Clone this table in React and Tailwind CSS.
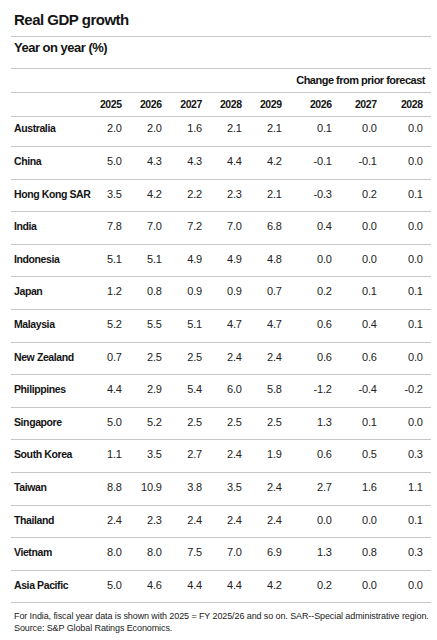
import React from "react";

const rows = [
  ["Australia", "2.0", "2.0", "1.6", "2.1", "2.1", "0.1", "0.0", "0.0"],
  ["China", "5.0", "4.3", "4.3", "4.4", "4.2", "-0.1", "-0.1", "0.0"],
  ["Hong Kong SAR", "3.5", "4.2", "2.2", "2.3", "2.1", "-0.3", "0.2", "0.1"],
  ["India", "7.8", "7.0", "7.2", "7.0", "6.8", "0.4", "0.0", "0.0"],
  ["Indonesia", "5.1", "5.1", "4.9", "4.9", "4.8", "0.0", "0.0", "0.0"],
  ["Japan", "1.2", "0.8", "0.9", "0.9", "0.7", "0.2", "0.1", "0.1"],
  ["Malaysia", "5.2", "5.5", "5.1", "4.7", "4.7", "0.6", "0.4", "0.1"],
  ["New Zealand", "0.7", "2.5", "2.5", "2.4", "2.4", "0.6", "0.6", "0.0"],
  ["Philippines", "4.4", "2.9", "5.4", "6.0", "5.8", "-1.2", "-0.4", "-0.2"],
  ["Singapore", "5.0", "5.2", "2.5", "2.5", "2.5", "1.3", "0.1", "0.0"],
  ["South Korea", "1.1", "3.5", "2.7", "2.4", "1.9", "0.6", "0.5", "0.3"],
  ["Taiwan", "8.8", "10.9", "3.8", "3.5", "2.4", "2.7", "1.6", "1.1"],
  ["Thailand", "2.4", "2.3", "2.4", "2.4", "2.4", "0.0", "0.0", "0.1"],
  ["Vietnam", "8.0", "8.0", "7.5", "7.0", "6.9", "1.3", "0.8", "0.3"],
  ["Asia Pacific", "5.0", "4.6", "4.4", "4.4", "4.2", "0.2", "0.0", "0.0"],
];

const years = ["2025", "2026", "2027", "2028", "2029", "2026", "2027", "2028"];

const grid = "grid grid-cols-[67.7px_40px_40px_40.3px_39.7px_40px_50px_45px_46px]";

export default function App() {
  return (
    <div className="w-[437px] h-[640px] bg-white text-[#141414] overflow-hidden font-['Liberation_Sans',Arial,sans-serif]">
      <div className="ml-[11px] w-[420px]">
        <div className="pl-[3px] pt-[10px] h-[37px] border-b border-[#c6c6c6] text-[15px] leading-[20px] font-bold tracking-[-0.5px]">
          Real GDP growth
        </div>
        <div className="pl-[3px] pt-[3px] h-[32px] border-b border-[#c6c6c6] text-[13px] leading-[16px] font-bold tracking-[-0.5px]">
          Year on year (%)
        </div>
        <div className="pr-[6px] pt-[3px] h-[24px] border-b border-[#c6c6c6] text-[11px] leading-[16px] font-bold text-right tracking-[-0.5px]">
          Change from prior forecast
        </div>
        <div className={`${grid} pl-[3px] pt-[3px] h-[24px] border-b border-[#c6c6c6] text-[10.5px] leading-[16px] font-bold tracking-[-0.4px]`}>
          <div />
          {years.map((y, i) => (
            <div key={i} className="text-right">{y}</div>
          ))}
        </div>
        {rows.map((r, idx) => (
          <div
            key={r[0]}
            className={`${grid} pl-[3px] border-b border-[#c6c6c6] text-[11px] leading-[16px] ${
              idx === 0 ? "pt-[3px] h-[30px]" : "pt-[6px] h-[32.6px]"
            }`}
          >
            <div className="font-bold text-[10.5px] tracking-[-0.4px] whitespace-nowrap">{r[0]}</div>
            {r.slice(1).map((v, i) => (
              <div key={i} className="text-right text-[#222] tracking-[-0.2px]">{v}</div>
            ))}
          </div>
        ))}
        <div className="pl-[3px] pt-[7px] text-[9px] leading-[12px] text-[#1a1a1a] tracking-[-0.1px]">
          <div className="whitespace-nowrap">
            For India, fiscal year data is shown with 2025 = FY 2025/26 and so on. SAR--Special administrative region.
          </div>
          <div>Source: S&amp;P Global Ratings Economics.</div>
        </div>
      </div>
    </div>
  );
}
